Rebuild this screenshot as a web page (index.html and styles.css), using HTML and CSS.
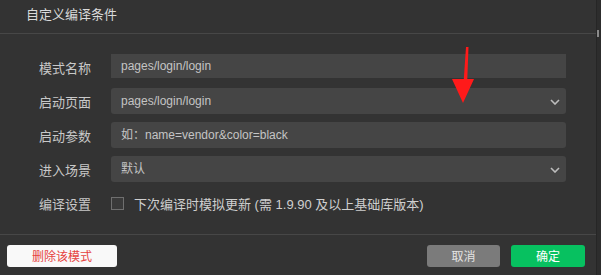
FILE: index.html
```html
<!DOCTYPE html>
<html>
<head>
<meta charset="utf-8">
<link rel="stylesheet" href="styles.css">
</head>
<body>
<div class="page">
  <div class="dialog">
    <div class="header">自定义编译条件</div>
    <div class="body">
      <div class="row">
        <div class="label">模式名称</div>
        <div class="field field-flat">pages/login/login</div>
      </div>
      <div class="row">
        <div class="label">启动页面</div>
        <div class="field field-select">pages/login/login
          <svg class="chev" width="10" height="6" viewBox="0 0 10 6"><polyline points="1,1 5,5 9,1" fill="none" stroke="#bdbdbd" stroke-width="1.6"/></svg>
        </div>
      </div>
      <div class="row">
        <div class="label">启动参数</div>
        <div class="field">如：name=vendor&amp;color=black</div>
      </div>
      <div class="row">
        <div class="label">进入场景</div>
        <div class="field field-select">默认
          <svg class="chev" width="10" height="6" viewBox="0 0 10 6"><polyline points="1,1 5,5 9,1" fill="none" stroke="#bdbdbd" stroke-width="1.6"/></svg>
        </div>
      </div>
      <div class="row row-check">
        <div class="label">编译设置</div>
        <div class="check"><span class="box"></span><span class="check-text">下次编译时模拟更新 (需 1.9.90 及以上基础库版本)</span></div>
      </div>
    </div>
    <div class="footer">
      <div class="btn btn-delete">删除该模式</div>
      <div class="spacer"></div>
      <div class="btn btn-cancel">取消</div>
      <div class="btn btn-ok">确定</div>
    </div>
    <svg class="arrow" width="30" height="62" viewBox="0 0 30 62">
      <polygon points="15,1 17.5,1 16.3,33 23,33 12,57 1,33 12.8,33" fill="#ff1a1a"/>
    </svg>
  </div>
  <div class="edge"><span class="thumb"></span></div>
</div>
</body>
</html>
```
FILE: styles.css
```css
html, body {
  margin: 0;
  padding: 0;
  background: #333333;
}
.page {
  width: 601px;
  height: 275px;
  display: flex;
  overflow: hidden;
  font-family: "Liberation Sans", "Noto Sans CJK SC", sans-serif;
}
.dialog {
  position: relative;
  width: 596px;
  height: 275px;
  display: flex;
  flex-direction: column;
  background: #333333;
}
.edge {
  position: relative;
  width: 5px;
  background: #2d2d2d;
  border-left: 1px solid #262626;
  box-sizing: border-box;
}
.thumb {
  position: absolute;
  left: 0;
  top: 30px;
  width: 2px;
  height: 7px;
  background: #8a8a8a;
}
.header {
  height: 34px;
  box-sizing: border-box;
  padding: 5px 0 0 26px;
  line-height: 18px;
  font-size: 13px;
  color: #dadada;
  border-bottom: 1px solid #474747;
  font-family: "Noto Sans CJK SC", sans-serif;
}
.body {
  padding-top: 20px;
  display: flex;
  flex-direction: column;
  gap: 8px;
  height: 201px;
  box-sizing: border-box;
  border-bottom: 1px solid #474747;
}
.row {
  display: flex;
  align-items: center;
  height: 26px;
  padding-left: 39px;
}
.label {
  width: 72px;
  font-size: 13px;
  color: #c8c8c8;
  font-family: "Noto Sans CJK SC", sans-serif;
}
.field {
  width: 455px;
  height: 26px;
  box-sizing: border-box;
  padding-left: 10px;
  background: #454545;
  border-radius: 3px;
  font-size: 12px;
  color: #c4c4c4;
  line-height: 26px;
  display: flex;
  align-items: center;
}
.field-flat {
  height: 24px;
  border-radius: 0;
  align-self: flex-start;
}
.field-select {
  justify-content: space-between;
  padding-right: 6px;
}
.chev {
  display: block;
  margin-top: 2px;
}
.check {
  display: flex;
  align-items: center;
  gap: 10px;
}
.box {
  width: 13px;
  height: 13px;
  box-sizing: border-box;
  border: 1px solid #6f6f6f;
  background: #3a3a3a;
}
.check-text {
  font-size: 13px;
  color: #cfcfcf;
  font-family: "Liberation Sans", "Noto Sans CJK SC", sans-serif;
}
.footer {
  display: flex;
  align-items: flex-start;
  padding: 10px 11px 0 7px;
  gap: 11px;
}
.spacer {
  flex: 1;
}
.btn {
  height: 22px;
  line-height: 22px;
  text-align: center;
  border-radius: 3px;
  font-size: 12px;
  font-family: "Noto Sans CJK SC", sans-serif;
}
.btn-delete {
  width: 110px;
  background: #f9f9f9;
  color: #e64340;
}
.btn-cancel {
  width: 73px;
  background: #7b7b7b;
  color: #e4e4e4;
}
.btn-ok {
  width: 74px;
  background: #07c160;
  color: #ffffff;
}
.arrow {
  position: absolute;
  left: 451px;
  top: 46px;
}
```
